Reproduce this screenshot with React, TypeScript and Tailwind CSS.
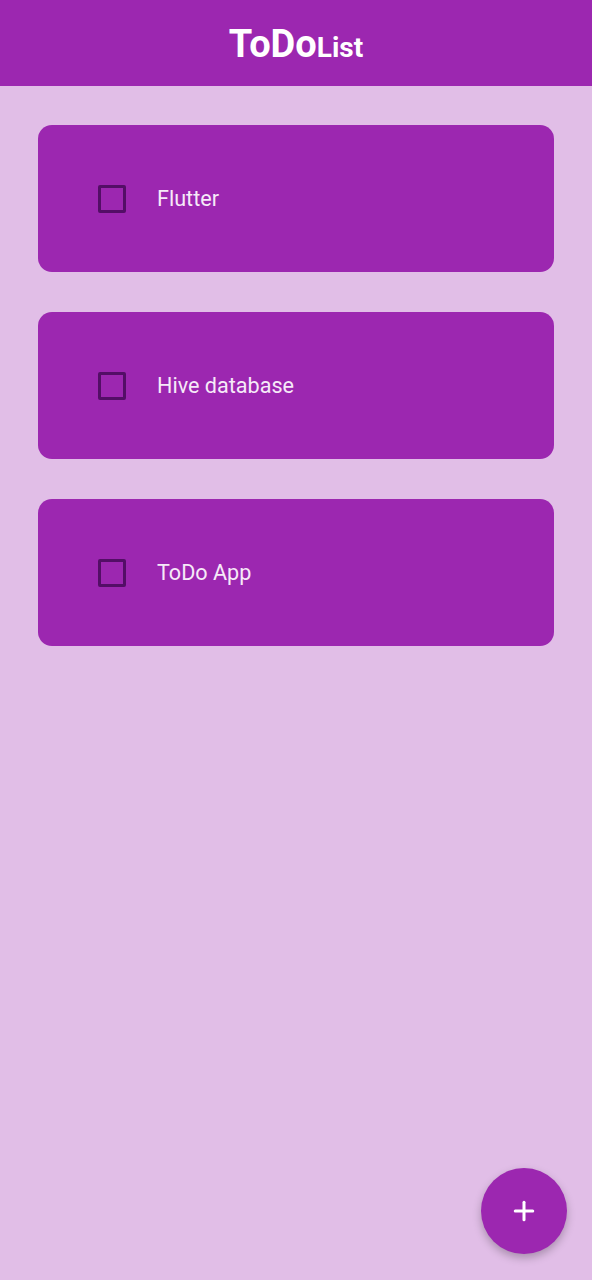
import { Plus } from 'lucide-react'

const todos = ['Flutter', 'Hive database', 'ToDo App']

export default function App() {
  return (
    <div
      className="relative min-h-[1280px] w-full bg-[#e1bee7]"
      style={{ fontFamily: 'Roboto, "Noto Sans", sans-serif' }}
    >
      {/* App bar */}
      <header className="flex h-[86px] items-center justify-center bg-[#9c27b0] pt-[2px]">
        <h1 className="flex items-baseline font-bold text-white">
          <span className="text-[38px] leading-none">ToDo</span>
          <span className="text-[28px] leading-none">List</span>
        </h1>
      </header>

      {/* Tasks */}
      <main className="flex flex-col gap-[40px] px-[38px] pt-[39px]">
        {todos.map((name) => (
          <div
            key={name}
            className="flex h-[147px] items-center gap-[31px] rounded-[14px] bg-[#9c27b0] pl-[60px]"
          >
            <span className="h-[28px] w-[28px] shrink-0 rounded-[2px] border-[3px] border-[#530e66]" />
            <span className="pt-[2px] text-[21.6px] text-[#f6eaf8]">{name}</span>
          </div>
        ))}
      </main>

      {/* FAB */}
      <button className="absolute bottom-[26px] right-[25px] flex h-[86px] w-[86px] items-center justify-center rounded-full bg-[#9c27b0] shadow-[0_4px_8px_rgba(0,0,0,0.25)]">
        <Plus className="h-[30px] w-[30px] text-white" strokeWidth={2.4} />
      </button>
    </div>
  )
}
